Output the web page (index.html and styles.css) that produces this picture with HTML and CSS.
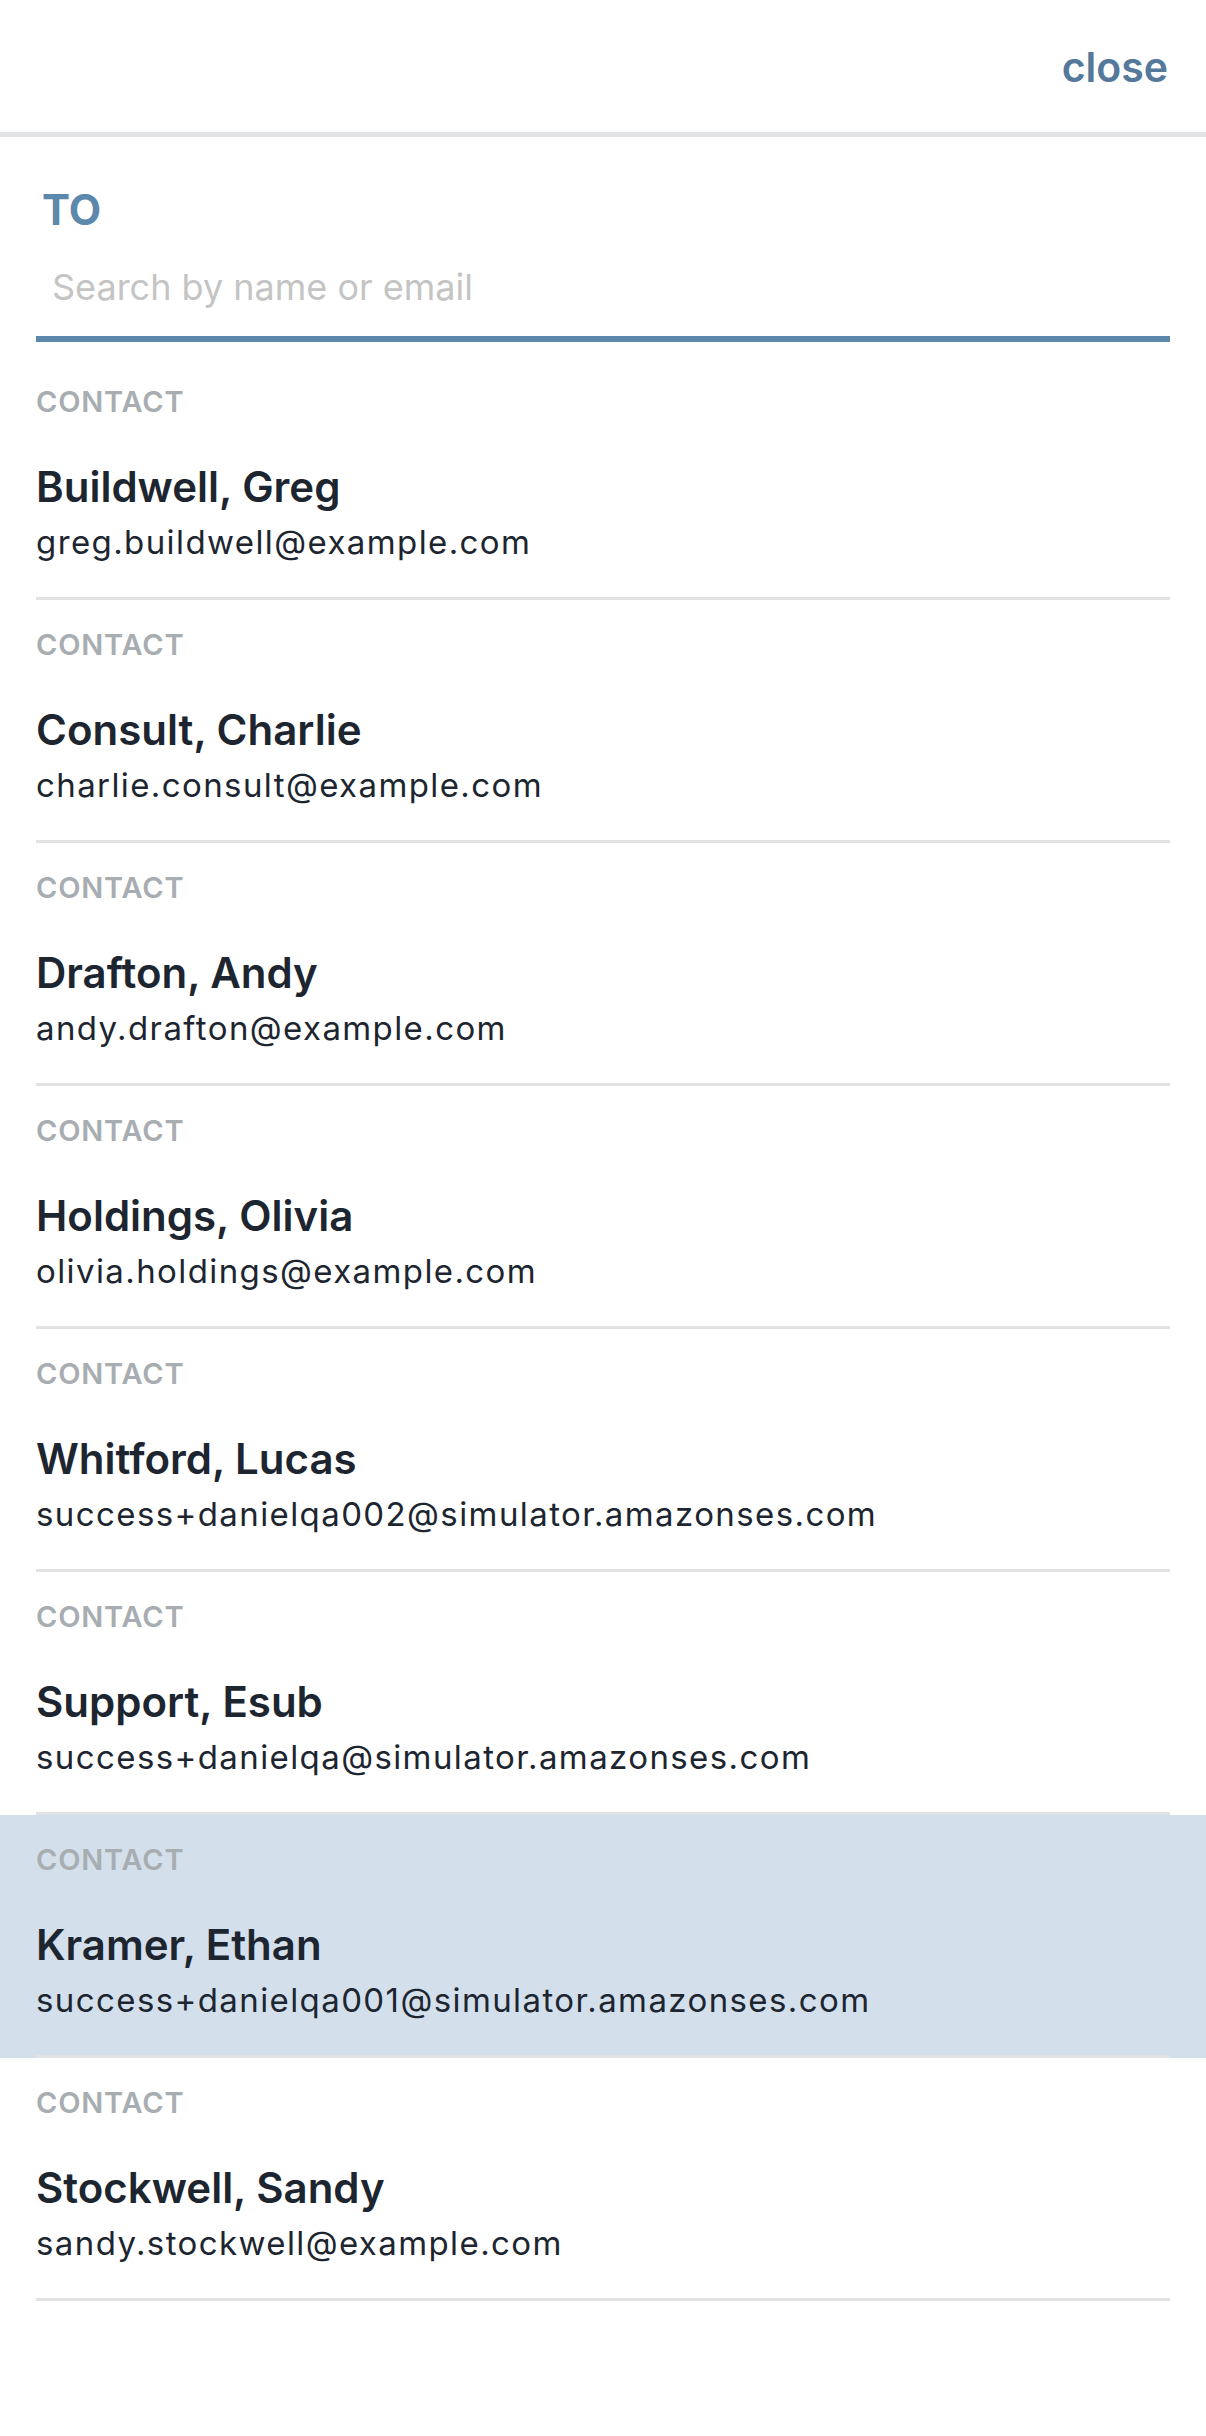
FILE: index.html
```html
<!DOCTYPE html>
<html lang="en">
<head>
    <meta charset="UTF-8">
    <meta name="viewport" content="width=device-width, initial-scale=1.0">
    <title>Select recipient</title>
    <link rel="stylesheet" href="styles.css">
</head>
<body>

<div class="header">
    <a class="close" href="#">close</a>
</div>

<div class="search">
    <label class="search-label" for="search">TO</label>
    <input type="text" id="search" class="search-input" placeholder="Search by name or email">
</div>

<ul class="contacts">
    <li class="contact">
        <div class="contact-inner">
            <div class="contact-type">CONTACT</div>
            <div class="contact-name">Buildwell, Greg</div>
            <div class="contact-email">greg.buildwell@example.com</div>
        </div>
    </li>
    <li class="contact">
        <div class="contact-inner">
            <div class="contact-type">CONTACT</div>
            <div class="contact-name">Consult, Charlie</div>
            <div class="contact-email">charlie.consult@example.com</div>
        </div>
    </li>
    <li class="contact">
        <div class="contact-inner">
            <div class="contact-type">CONTACT</div>
            <div class="contact-name">Drafton, Andy</div>
            <div class="contact-email">andy.drafton@example.com</div>
        </div>
    </li>
    <li class="contact">
        <div class="contact-inner">
            <div class="contact-type">CONTACT</div>
            <div class="contact-name">Holdings, Olivia</div>
            <div class="contact-email">olivia.holdings@example.com</div>
        </div>
    </li>
    <li class="contact">
        <div class="contact-inner">
            <div class="contact-type">CONTACT</div>
            <div class="contact-name">Whitford, Lucas</div>
            <div class="contact-email">success+danielqa002@simulator.amazonses.com</div>
        </div>
    </li>
    <li class="contact">
        <div class="contact-inner">
            <div class="contact-type">CONTACT</div>
            <div class="contact-name">Support, Esub</div>
            <div class="contact-email">success+danielqa@simulator.amazonses.com</div>
        </div>
    </li>
    <li class="contact selected">
        <div class="contact-inner">
            <div class="contact-type">CONTACT</div>
            <div class="contact-name">Kramer, Ethan</div>
            <div class="contact-email">success+danielqa001@simulator.amazonses.com</div>
        </div>
    </li>
    <li class="contact">
        <div class="contact-inner">
            <div class="contact-type">CONTACT</div>
            <div class="contact-name">Stockwell, Sandy</div>
            <div class="contact-email">sandy.stockwell@example.com</div>
        </div>
    </li>
</ul>

</body>
</html>
```

FILE: styles.css
```css
body {
    font-family: Inter, "Noto Sans", Arial, sans-serif;
    background-color: #ffffff;
    color: #1d2630;
    margin: 0;
}
.header {
    height: 137px;
    box-sizing: border-box;
    padding: 43px 38px 0 36px;
    border-bottom: 5px solid #e2e3e4;
    display: flex;
    justify-content: flex-end;
}
.close {
    font-size: 41px;
    line-height: 48px;
    font-weight: 600;
    color: #54799b;
    text-decoration: none;
}
.search {
    margin: 0 36px;
    padding-top: 48px;
    border-bottom: 6px solid #5b88ab;
}
.search-label {
    display: block;
    padding-left: 6px;
    font-size: 42px;
    line-height: 50px;
    font-weight: 700;
    color: #5b88ab;
}
.search-input {
    display: block;
    width: 100%;
    box-sizing: border-box;
    margin-top: 30px;
    padding: 0 16px 27px 16px;
    border: none;
    outline: none;
    font-family: inherit;
    font-size: 36px;
    line-height: 44px;
    height: 71px;
    color: #1d2630;
    background: none;
}
.search-input::placeholder {
    color: #c4c4c4;
}
.contacts {
    list-style: none;
    margin: 15px 0 0 0;
    padding: 0;
}
.contact {
    padding: 0 36px;
    cursor: pointer;
}
.contact.selected {
    background-color: #d3e0ec;
}
.contact-inner {
    height: 243px;
    box-sizing: border-box;
    padding-top: 28px;
    border-bottom: 3px solid #e1e2e3;
}
.contact-type {
    font-size: 29px;
    line-height: 34px;
    font-weight: 600;
    letter-spacing: 0.8px;
    color: #a8adb1;
}
.contact-name {
    margin-top: 43px;
    font-size: 42px;
    line-height: 50px;
    font-weight: 600;
}
.contact-email {
    margin-top: 10px;
    font-size: 33px;
    line-height: 40px;
    letter-spacing: 1.4px;
}
```
